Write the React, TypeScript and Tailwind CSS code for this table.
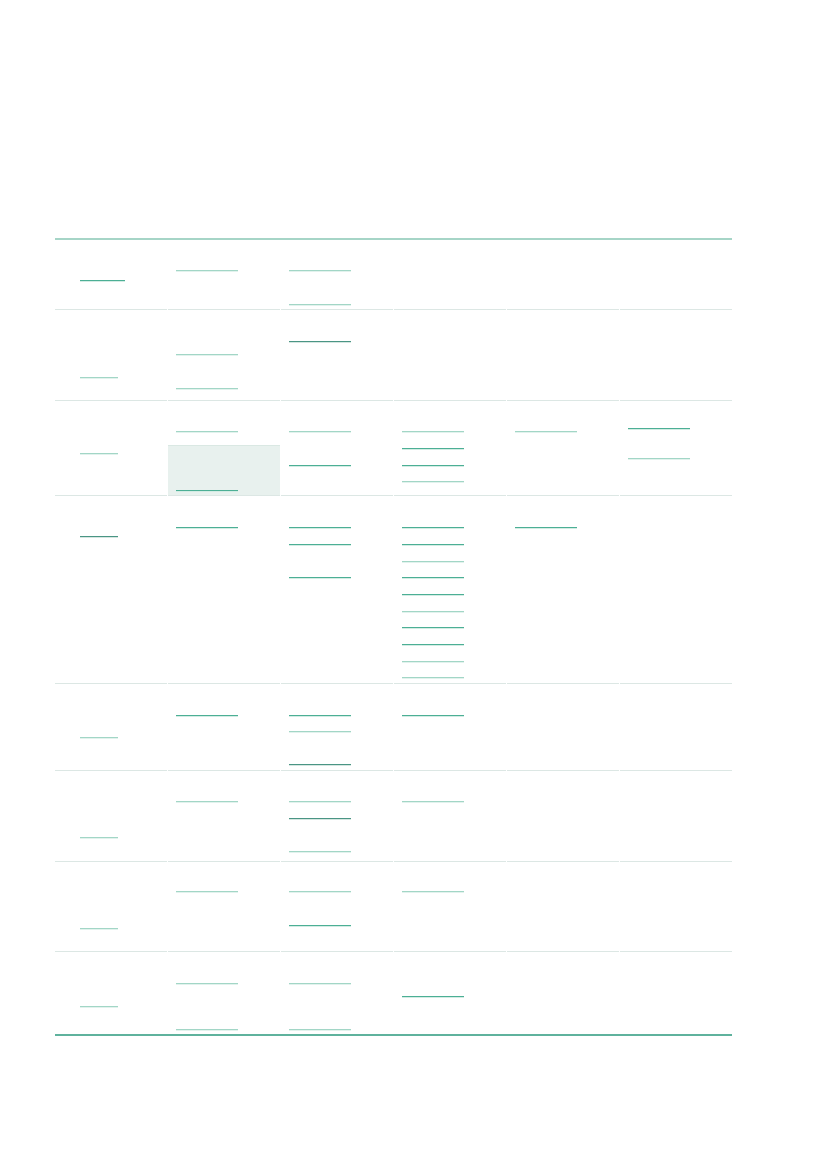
import type { FC } from "react";

// a placeholder line: "d" = dark teal, "l" = light teal, "s" = slate teal
type Tone = "d" | "l" | "s";
type Bar = { mt: string; tone: Tone };
type Cell = { bars: Bar[]; highlight?: { top: Bar[]; split: string; bottom: Bar[] } };
type Row = { h: string; last?: boolean; cells: Cell[] };

const d = (mt: string): Bar => ({ mt, tone: "d" });
const l = (mt: string): Bar => ({ mt, tone: "l" });
const s = (mt: string): Bar => ({ mt, tone: "s" });
const c = (...bars: Bar[]): Cell => ({ bars });

const rows: Row[] = [
    {
        h: "h-[70px]",
        cells: [c(d("mt-[40px]")), c(l("mt-[30px]")), c(l("mt-[30px]"), l("mt-[33px]")), c(), c(), c()],
    },
    {
        h: "h-[91px]",
        cells: [c(l("mt-[67px]")), c(l("mt-[44px]"), l("mt-[33px]")), c(s("mt-[31px]")), c(), c(), c()],
    },
    {
        h: "h-[95px]",
        cells: [
            c(l("mt-[52px]")),
            { bars: [], highlight: { top: [l("mt-[30px]")], split: "h-[44px]", bottom: [d("mt-[44px]")] } },
            c(l("mt-[30px]"), d("mt-[33px]")),
            c(l("mt-[30px]"), d("mt-[16px]"), d("mt-[16px]"), l("mt-[15px]")),
            c(l("mt-[30px]")),
            c(d("mt-[27px]"), l("mt-[29px]")),
        ],
    },
    {
        h: "h-[188px]",
        cells: [
            c(s("mt-[40px]")),
            c(d("mt-[31px]")),
            c(d("mt-[31px]"), d("mt-[16px]"), d("mt-[32px]")),
            c(
                d("mt-[31px]"),
                d("mt-[16px]"),
                l("mt-[16px]"),
                d("mt-[15px]"),
                d("mt-[16px]"),
                l("mt-[16px]"),
                d("mt-[15px]"),
                d("mt-[16px]"),
                l("mt-[16px]"),
                l("mt-[15px]"),
            ),
            c(d("mt-[31px]")),
            c(),
        ],
    },
    {
        h: "h-[87px]",
        cells: [c(l("mt-[53px]")), c(d("mt-[31px]")), c(d("mt-[31px]"), l("mt-[15px]"), s("mt-[32px]")), c(d("mt-[31px]")), c(), c()],
    },
    {
        h: "h-[91px]",
        cells: [c(l("mt-[66px]")), c(l("mt-[30px]")), c(l("mt-[30px]"), s("mt-[16px]"), l("mt-[32px]")), c(l("mt-[30px]")), c(), c()],
    },
    {
        h: "h-[90px]",
        cells: [c(l("mt-[66px]")), c(l("mt-[29px]")), c(l("mt-[29px]"), d("mt-[33px]")), c(l("mt-[29px]")), c(), c()],
    },
    {
        h: "h-[82px]",
        last: true,
        cells: [c(l("mt-[54px]")), c(l("mt-[31px]"), l("mt-[45px]")), c(l("mt-[31px]"), l("mt-[45px]")), c(d("mt-[44px]")), c(), c()],
    },
];

const toneClass: Record<Tone, string> = {
    d: "bg-[#4caf95] shadow-[0_1px_0_#d3ece4]",
    l: "bg-[#a2d6c6] shadow-[0_1px_0_#e2f2ed]",
    s: "bg-[#4a9584] shadow-[0_1px_0_#d5e6e1]",
};

const Line: FC<{ bar: Bar }> = ({ bar }) => (
    <div className={["h-px shrink-0", bar.mt, toneClass[bar.tone]].join(" ")} />
);

const App: FC = () => {
    return (
        <div className="min-h-screen bg-white font-['Liberation_Sans',sans-serif]">
            <div className="pt-[238px] pl-[55px]">
                <div className="w-[677px] border-t-2 border-b-2 border-t-[#a6d5c7] border-b-[#5fb29d]">
                    {rows.map((row, ri) => (
                        <div key={ri} className={`grid grid-cols-6 gap-x-px ${row.h}`}>
                            {row.cells.map((cell, ci) => (
                                <div
                                    key={ci}
                                    className={[
                                        "flex flex-col",
                                        row.last ? "" : "border-b border-[#dce7e4]",
                                        ci === 0 ? "pl-[25px]" : "pl-2",
                                    ].join(" ")}
                                >
                                    {cell.highlight ? (
                                        <div className="-ml-2 flex flex-1 flex-col">
                                            <div className={`flex flex-col pl-2 ${cell.highlight.split}`}>
                                                {cell.highlight.top.map((b, bi) => (
                                                    <div key={bi} className="w-[62px]">
                                                        <Line bar={b} />
                                                    </div>
                                                ))}
                                            </div>
                                            <div className="flex flex-1 flex-col border-t border-[#dae8e3] bg-[#e8f1ee] pl-2">
                                                {cell.highlight.bottom.map((b, bi) => (
                                                    <div key={bi} className="w-[62px]">
                                                        <Line bar={b} />
                                                    </div>
                                                ))}
                                            </div>
                                        </div>
                                    ) : (
                                        cell.bars.map((b, bi) => (
                                            <div key={bi} className={ci === 0 ? (ri === 0 ? "w-[45px]" : "w-[38px]") : "w-[62px]"}>
                                                <Line bar={b} />
                                            </div>
                                        ))
                                    )}
                                </div>
                            ))}
                        </div>
                    ))}
                </div>
            </div>
        </div>
    );
};

export default App;
